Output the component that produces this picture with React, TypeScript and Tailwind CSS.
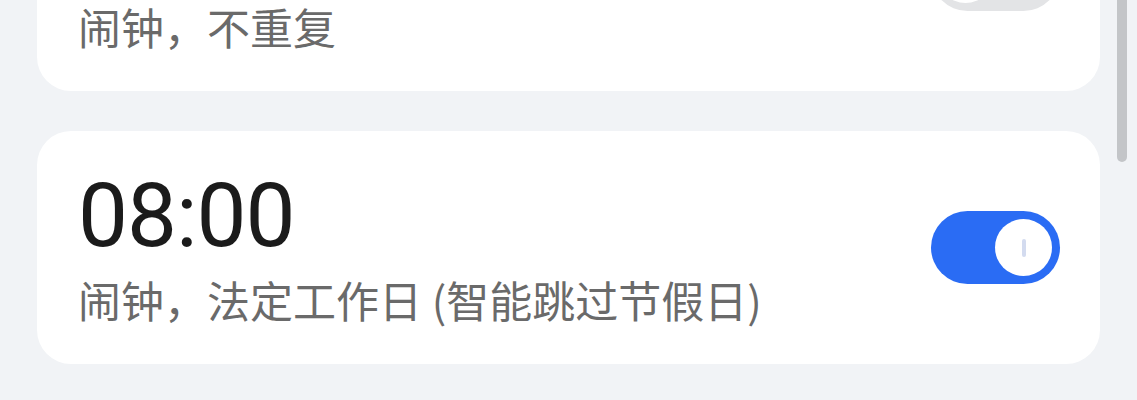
import React from "react";

type Alarm = { time: string; label: string; on: boolean };

const alarms: Alarm[] = [
  { time: "07:00", label: "闹钟，不重复", on: false },
  { time: "08:00", label: "闹钟，法定工作日 (智能跳过节假日)", on: true },
];

function Toggle({ on }: { on: boolean }) {
  return (
    <div
      className={
        on
          ? "relative flex h-[73px] w-[129px] shrink-0 items-center justify-end rounded-full bg-[#2a6cf4] pr-[8px]"
          : "relative flex h-[73px] w-[129px] shrink-0 items-center justify-start rounded-full bg-[#e3e4e6] pl-[6px]"
      }
    >
      <div className="flex h-[57px] w-[57px] items-center justify-center rounded-full bg-white">
        {on ? <div className="h-[18px] w-[4px] rounded-full bg-[#d3dbef]" /> : null}
      </div>
    </div>
  );
}

function AlarmCard({ alarm, className }: { alarm: Alarm; className?: string }) {
  return (
    <div
      className={
        "flex h-[233px] items-center justify-between rounded-[34px] bg-white pl-[41px] pr-[40px] " +
        (className ?? "")
      }
    >
      <div className="flex flex-col">
        <div
          className="text-[89px] leading-[88px] tracking-[-1px] text-[#1b1b1b]"
          style={{ fontFamily: "Roboto, 'Noto Sans', sans-serif" }}
        >
          {alarm.time}
        </div>
        <div
          className="mt-[14px] text-[43px] leading-[50px] text-[#6a6a6a]"
          style={{ fontFamily: "'Noto Sans CJK SC', 'Noto Sans', sans-serif" }}
        >
          {alarm.label}
        </div>
      </div>
      <Toggle on={alarm.on} />
    </div>
  );
}

export default function App() {
  return (
    <div className="relative h-[400px] w-[1137px] overflow-hidden bg-[#f1f3f6]">
      <div className="flex flex-col gap-[40px] pl-[37px] pr-[37px]">
        <AlarmCard alarm={alarms[0]} className="-mt-[142px]" />
        <AlarmCard alarm={alarms[1]} />
      </div>
      {/* scrollbar thumb */}
      <div className="absolute right-[10px] top-[-40px] h-[202px] w-[10px] rounded-full bg-[#c3c5c8]" />
    </div>
  );
}
